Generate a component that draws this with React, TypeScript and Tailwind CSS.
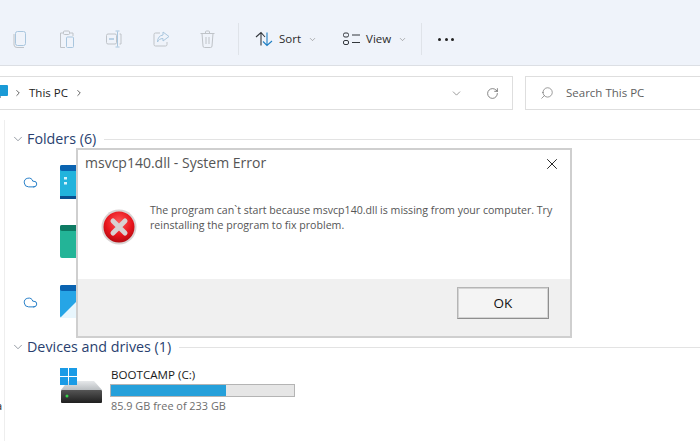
import React from 'react';
import { ChevronDown, ChevronRight, Cloud, RotateCw, Search, X } from 'lucide-react';

const font = "font-['Open_Sans','Noto_Sans',sans-serif]";

const ToolIcon = ({ children }: { children: React.ReactNode }) => (
  <svg width="20" height="20" viewBox="0 0 20 20" fill="none" strokeWidth="1" className="shrink-0">
    {children}
  </svg>
);

const Toolbar = () => (
  <div className="h-[66px] shrink-0 bg-[#eff3fa] border-b border-[#dcdfe4] flex items-center pl-[10px] pt-[13px]">
    <div className="flex items-center gap-[27px] w-[218px]">
      <ToolIcon>
        <rect x="5.5" y="2.5" width="10" height="14" rx="2" stroke="#a9c6de" />
        <path d="M4 5v11a3 3 0 0 0 3 2.5h7" stroke="#bfc3c8" />
      </ToolIcon>
      <ToolIcon>
        <path d="M6 4H3.500v14.500H8M13 4h3v3" stroke="#bfc3c8" />
        <rect x="6.500" y="2" width="6" height="3.500" rx="1" stroke="#bfc3c8" />
        <rect x="9.500" y="8" width="7" height="10.500" rx="1" stroke="#a9c6de" />
      </ToolIcon>
      <ToolIcon>
        <rect x="2.500" y="5" width="10" height="10" rx="1.500" stroke="#bfc3c8" />
        <path d="M5 10h5" stroke="#a9c6de" strokeWidth="1.500" />
        <path d="M13.500 2.500v15M11.500 2h4M11.500 18h4" stroke="#a9c6de" />
        <path d="M15.500 5h1.500v10h-1.500" stroke="#bfc3c8" />
      </ToolIcon>
      <ToolIcon>
        <path d="M9 4H4.500a1.500 1.500 0 0 0-1.500 1.500v10A1.500 1.500 0 0 0 4.500 17h10a1.500 1.500 0 0 0 1.500-1.500V13" stroke="#bfc3c8" />
        <path d="M12 3l6 4.500-6 4.500V9.500c-3 0-4.500 1.500-5.500 3.500 0-4 2-6.500 5.500-7z" stroke="#a9c6de" />
      </ToolIcon>
      <ToolIcon>
        <path d="M2.500 4.500h14M7.500 4.500V3a1 1 0 0 1 1-1h2a1 1 0 0 1 1 1v1.500" stroke="#bfc3c8" />
        <path d="M4 4.500l1 12.500a1.500 1.500 0 0 0 1.500 1.500h6a1.500 1.500 0 0 0 1.500-1.500l1-12.500M8 8v7M11 8v7" stroke="#bfc3c8" />
      </ToolIcon>
    </div>
    <div className="w-px h-[32px] bg-[#dfe3e9] ml-[10px]" />
    <div className="flex items-center ml-[16px]">
      <svg width="18" height="16" viewBox="0 0 18 16" fill="none" strokeWidth="1.100">
        <path d="M6 14.500V1.500M1 6l5-4.500L10 6" stroke="#33373c" />
        <path d="M12 1.500v13M8 10.500l4 4 5-4.500" stroke="#1f7fc4" />
      </svg>
      <span className="text-[11.500px] text-[#2b2b2b] ml-[6px]">Sort</span>
      <ChevronDown className="w-[9px] h-[9px] ml-[7px] text-[#7b7b7b]" strokeWidth={1.500} />
    </div>
    <div className="flex items-center ml-[26px]">
      <svg width="17" height="14" viewBox="0 0 17 14" fill="none" stroke="#33373c" strokeWidth="1">
        <rect x="0.500" y="1" width="5" height="4" rx="1.500" />
        <rect x="0.500" y="8.500" width="5" height="4" rx="1.500" />
        <path d="M9 3h8M9 10.500h8" />
      </svg>
      <span className="text-[11.500px] text-[#2b2b2b] ml-[6px]">View</span>
      <ChevronDown className="w-[9px] h-[9px] ml-[7px] text-[#7b7b7b]" strokeWidth={1.500} />
    </div>
    <div className="w-px h-[32px] bg-[#dfe3e9] ml-[14px]" />
    <div className="flex items-center gap-[3.500px] ml-[16px]">
      <span className="w-[3px] h-[3px] rounded-full bg-[#222]" />
      <span className="w-[3px] h-[3px] rounded-full bg-[#222]" />
      <span className="w-[3px] h-[3px] rounded-full bg-[#222]" />
    </div>
  </div>
);

const AddressRow = () => (
  <div className="h-[54px] shrink-0 flex items-start pt-[10px]">
    <div className="w-[513px] h-[34px] shrink-0 border border-l-0 border-[#dedede] flex items-center pr-[13px]">
      <svg width="8" height="17" viewBox="0 0 8 17" className="shrink-0">
        <rect x="-4" y="0" width="12" height="11" rx="1" fill="#1a9ad6" />
        <rect x="-4" y="11" width="5" height="2" fill="#8fa3b3" />
      </svg>
      <ChevronRight className="w-[10px] h-[10px] ml-[5px] text-[#444]" strokeWidth={2} />
      <span className="text-[11.500px] text-[#222] ml-[6px]">This PC</span>
      <ChevronRight className="w-[10px] h-[10px] ml-[6px] text-[#444]" strokeWidth={2} />
      <ChevronDown className="w-[13px] h-[13px] ml-auto text-[#666]" strokeWidth={1.200} />
      <RotateCw className="w-[13px] h-[13px] ml-[23px] text-[#555]" strokeWidth={1.300} />
    </div>
    <div className="w-[180px] h-[34px] shrink-0 ml-[12px] border border-[#dedede] flex items-center pl-[14px]">
      <Search className="w-[14px] h-[14px] text-[#666] -scale-x-100" strokeWidth={1.100} />
      <span className="text-[11.500px] text-[#5f5f5f] ml-[12px]">Search This PC</span>
    </div>
  </div>
);

const SectionHeader = ({ label }: { label: string }) => (
  <div className="flex items-center h-[18px] pl-[6px]">
    <ChevronDown className="w-[14px] h-[14px] text-[#6b7480]" strokeWidth={1.200} />
    <span className="text-[14.300px] text-[#2a3f6f] ml-[2px] whitespace-nowrap">{label}</span>
    <div className="flex-1 h-px bg-[#e3e3e3] ml-[8px]" />
  </div>
);

const FolderStub = ({ cloud, top, bottom, children }: { cloud?: boolean; top: string; bottom: string; children?: React.ReactNode }) => (
  <div className="flex items-start h-[60px] pl-[18px]">
    <div className="w-[15px] pt-[10px]">{cloud && <Cloud className="w-[15px] h-[15px] text-[#1b78c4]" strokeWidth={1.500} />}</div>
    <svg width="16" height="34" viewBox="0 0 16 34" className="ml-[22px] shrink-0">
      <rect x="0" y="0" width="30" height="33" rx="2" fill={bottom} />
      <rect x="0" y="0" width="30" height="6" rx="2" fill={top} />
      {children}
    </svg>
  </div>
);

const App = () => (
  <div className={`relative w-[700px] h-[441px] overflow-hidden bg-white ${font}`}>
    <div className="flex flex-col h-full">
      <Toolbar />
      <AddressRow />
      <div className="flex-1 border-l border-[#eeeeee] ml-[4px] pt-[10px]">
        <SectionHeader label="Folders (6)" />
        <div className="pt-[17px]">
          <FolderStub cloud top="#0a63b0" bottom="#22b3dc">
            <rect x="4" y="12" width="3" height="2.500" fill="#d8f2fa" />
            <rect x="4" y="17" width="3" height="2.500" fill="#d8f2fa" />
            <rect x="0" y="31" width="30" height="3" fill="#0a4f8f" />
          </FolderStub>
          <FolderStub top="#0d7a63" bottom="#23b497" />
          <FolderStub cloud top="#0a63b0" bottom="#26a5e6">
            <path d="M0 33 L16 17 V33 Z" fill="#e8f6fd" />
          </FolderStub>
        </div>
        <div className="-mt-[7px]">
          <SectionHeader label="Devices and drives (1)" />
        </div>
        <div className="flex items-start pl-[55px] pt-[12px]">
          <svg width="43" height="36" viewBox="0 0 43 36" className="shrink-0">
            <defs>
              <linearGradient id="diskTop" x1="0" y1="0" x2="0" y2="1">
                <stop offset="0%" stopColor="#e6e8ea" />
                <stop offset="100%" stopColor="#b9bdc1" />
              </linearGradient>
              <linearGradient id="diskBase" x1="0" y1="0" x2="0" y2="1">
                <stop offset="0%" stopColor="#555555" />
                <stop offset="100%" stopColor="#1f1f1f" />
              </linearGradient>
            </defs>
            <path d="M8 13 H34 L42 22 H1 Z" fill="url(#diskTop)" />
            <rect x="1" y="22" width="41" height="13" rx="1" fill="url(#diskBase)" />
            <circle cx="7" cy="28" r="1.500" fill="#36d14a" />
            <rect x="0" y="0" width="8" height="8" fill="#1a9be6" />
            <rect x="9" y="0" width="8" height="8" fill="#1a9be6" />
            <rect x="0" y="9" width="8" height="8" fill="#1a9be6" />
            <rect x="9" y="9" width="8" height="8" fill="#1a9be6" />
          </svg>
          <div className="ml-[7px] -mt-[2px]">
            <div className="pl-px text-[11.600px] leading-[17px] text-[#1a1a1a]">BOOTCAMP (C:)</div>
            <div className="w-[185px] h-[13px] mt-[1px] border border-[#b4b4b4] bg-[#e6e6e6]">
              <div className="w-[115px] h-full bg-[#26a0da]" />
            </div>
            <div className="pl-px text-[10.900px] leading-[17px] text-[#6d6d6d]">85.9 GB free of 233 GB</div>
          </div>
        </div>
      </div>
    </div>

    <span className="absolute left-0 top-[398px] -translate-x-[4px] text-[11px] text-[#222]">a</span>

    <div className="absolute left-[76px] top-[148px] w-[496px] h-[190px] border-[2px] border-[#cfcfcf] bg-white flex flex-col">
      <div className="flex-1 relative">
        <div className="pl-[7px] pt-[3px] text-[14px] leading-[20px] text-[#555]">msvcp140.dll - System Error</div>
        <X className="absolute right-[9px] top-[5px] w-[18px] h-[18px] text-[#111]" strokeWidth={1.200} />
        <div className="flex items-start pl-[23px] pt-[31px]">
          <svg width="36" height="36" viewBox="0 0 36 36" className="shrink-0 mt-[5px]">
            <defs>
              <radialGradient id="err" cx="50%" cy="35%" r="70%">
                <stop offset="0%" stopColor="#ff5a5a" />
                <stop offset="60%" stopColor="#e8141c" />
                <stop offset="100%" stopColor="#a80a10" />
              </radialGradient>
            </defs>
            <circle cx="18" cy="18" r="17.500" fill="#d9d3d3" />
            <circle cx="18" cy="18" r="15.500" fill="url(#err)" />
            <path d="M12 12 L24 24 M24 12 L12 24" stroke="#d8d2d2" strokeWidth="5" strokeLinecap="round" />
          </svg>
          <p className="w-[412px] ml-[13px] -mt-[1px] text-[10.600px] leading-[15px] text-[#555]">
            The program can`t start because msvcp140.dll is missing from your computer. Try reinstalling the program to fix problem.
          </p>
        </div>
      </div>
      <div className="h-[57px] bg-[#f0f0f0] flex items-start justify-end pt-[8px] pr-[21px]">
        <div className="w-[92px] h-[32px] border border-[#8f8f8f] border-t-[#b5b5b5] border-l-[#b5b5b5] bg-[#f4f4f4] shadow-[inset_0_0_0_1px_#d4d4d4] flex items-center justify-center text-[13.500px] font-medium text-[#111]">
          OK
        </div>
      </div>
    </div>
  </div>
);

export default App;
